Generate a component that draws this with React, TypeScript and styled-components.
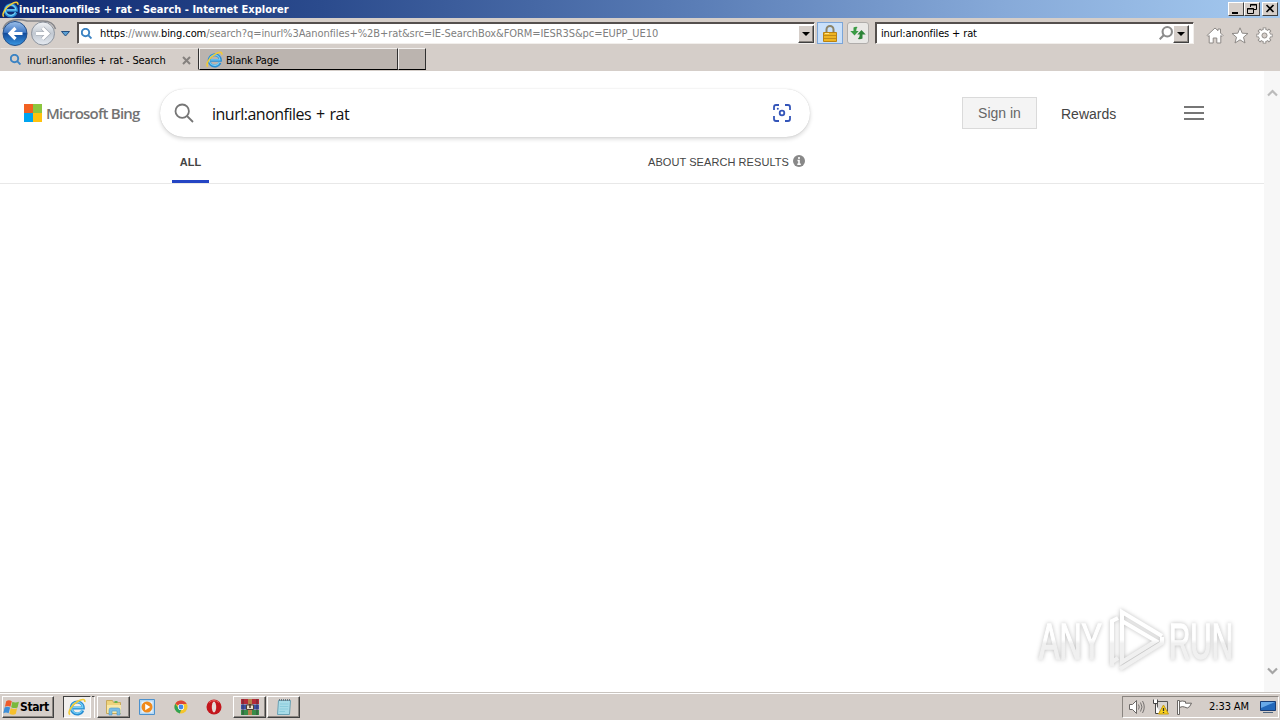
import React from 'react';
import styled, {createGlobalStyle} from 'styled-components';

const GlobalStyle = createGlobalStyle`
  * {
    box-sizing: border-box;
  }

  body {
    margin: 0;
    background: white;
    overflow: hidden;
  }

  svg {
    display: block;
    flex-shrink: 0;
  }
`;

const face = '#d5cec9';
const uiFont = '"DejaVu Sans Condensed", "DejaVu Sans", sans-serif';

const Window = styled.div`
  display: flex;
  flex-direction: column;
  width: 1280px;
  height: 720px;
  background: ${face};
  font-family: ${uiFont};
  font-size: 11px;
  color: black;
`;

const Label = styled.span<{ $spacing?: number }>`
  white-space: pre;
  line-height: 14px;
  letter-spacing: ${p => p.$spacing || 0}px;
`;

const TitleBar = styled.div`
  display: flex;
  align-items: center;
  height: 18px;
  padding: 0 2px;
  background: linear-gradient(90deg, #0e2870 0%, #2b4b8d 25%, #5679b3 52%, #86a9d8 78%, #a5caf0 100%);
  color: white;
  font-weight: bold;
`;

const TitleText = styled(Label)`
  flex: 1;
  margin-top: 1px;
`;

const CaptionButton = styled.div<{ $gap?: number }>`
  width: 16px;
  height: 14px;
  margin-left: ${p => p.$gap || 0}px;
  background: ${face};
  border: 1px solid;
  border-color: white #404040 #404040 white;
`;

const NavBar = styled.div`
  display: flex;
  align-items: flex-start;
  height: 30px;
  padding: 1px 8px 0 1px;
`;

const DropArrow = styled.div`
  margin: 12px 7px 0 3px;
`;

const Field = styled.div<{ $width: number }>`
  display: flex;
  align-items: center;
  width: ${p => p.$width}px;
  height: 22px;
  margin-top: 3px;
  padding-left: 3px;
  background: white;
  border: 1px solid;
  border-color: #55504e #f2efec #f2efec #55504e;
  box-shadow: inset 1px 1px 0 #55504e;
`;

const SearchField = styled(Field)`
  margin-left: 6px;
  padding: 0 4px 0 5px;
`;

const FieldText = styled(Label)`
  flex: 1;
  margin-top: 2px;
  color: #808080;

  > b {
    font-weight: normal;
    color: black;
  }
`;

const Address = styled(FieldText)`
  margin-left: 8px;
`;

const DropButton = styled.div`
  display: flex;
  align-items: center;
  justify-content: center;
  width: 16px;
  height: 18px;
  margin-top: 1px;
  background: ${face};
  border: 1px solid;
  border-color: white #404040 #404040 white;
  box-shadow: inset -1px -1px 0 #8a8580;
`;

const ToolButton = styled.div<{ $active?: boolean }>`
  display: flex;
  align-items: center;
  justify-content: center;
  width: ${p => p.$active ? 26 : 22}px;
  height: 22px;
  margin: 3px 0 0 ${p => p.$active ? 2 : 4}px;
  background: ${p => p.$active ? '#c9e0fa' : '#e9e8e6'};
  border: 1px solid ${p => p.$active ? '#7ba5d8' : '#b0adab'};
  border-radius: ${p => p.$active ? 0 : 3}px;
`;

const Commands = styled.div`
  display: flex;
  gap: 7px;
  margin: 8px -1px 0 auto;
`;

const TabStrip = styled.div`
  display: flex;
  height: 23px;
  border-bottom: 1px solid ${face};
`;

const Tab = styled.div<{ $width: number; $active?: boolean }>`
  display: flex;
  align-items: center;
  width: ${p => p.$width}px;
  height: 22px;
  padding-left: ${p => p.$active ? 9 : 6}px;
  background: ${p => p.$active ? face : '#bbb4af'};
  border: 1px solid;
  border-color: ${p => p.$active ? '#e9e5e2 #303030 transparent transparent' : '#f2efed #303030 #000 #f2efed'};
`;

const TabText = styled(Label)<{ $gap: number }>`
  flex: 1;
  margin: 3px 0 0 ${p => p.$gap}px;
`;

const CloseMark = styled.svg`
  margin: 2px 7px 0 0;
`;

const Page = styled.div`
  display: flex;
  height: 621px;
  background: white;
`;

const Document = styled.div`
  flex: 1;
  font-family: "Liberation Sans", Arial, sans-serif;
`;

const ScrollBar = styled.div`
  display: flex;
  flex-direction: column;
  justify-content: space-between;
  align-items: center;
  width: 16px;
  padding: 18px 0 17px;
  background: #f7f7f7;
`;

const BingHeader = styled.header`
  display: flex;
  align-items: flex-start;
  height: 67px;
  padding: 18px 60px 0 24px;
`;

const Brand = styled.div`
  display: flex;
  align-items: center;
  width: 136px;
  margin-top: 14px;
  gap: 4px;
`;

const Squares = styled.div`
  display: grid;
  grid-template-columns: 9px 9px;
  grid-template-rows: 9px 9px;

  > i:nth-child(1) { background: #f26122; }
  > i:nth-child(2) { background: #8cc63f; }
  > i:nth-child(3) { background: #00a4ef; }
  > i:nth-child(4) { background: #ffc20e; }
`;

const BrandText = styled.span`
  font: 600 15px/20px "Open Sans", sans-serif;
  letter-spacing: -0.8px;
  white-space: nowrap;
  color: #737373;
`;

const SearchBox = styled.div`
  display: flex;
  align-items: center;
  width: 650px;
  height: 48px;
  padding: 0 18px 0 14px;
  border-radius: 24px;
  box-shadow: 0 0 1px rgba(0, 0, 0, .2), 0 2px 4px rgba(0, 0, 0, .16);
`;

const Query = styled.span`
  flex: 1;
  margin: 2px 0 0 18px;
  font: 16px/22px "Open Sans", sans-serif;
  letter-spacing: -0.5px;
  word-spacing: 1.2px;
  color: #111;
`;

const SignIn = styled.div`
  width: 75px;
  height: 32px;
  margin: 8px 24px 0 152px;
  background: #f4f4f4;
  border: 1px solid #dadada;
  font-size: 14px;
  line-height: 31px;
  text-align: center;
  color: #666;
`;

const Rewards = styled.span`
  margin-top: 17px;
  font-size: 14px;
  line-height: 16px;
  color: #444;
`;

const Burger = styled.div`
  width: 20px;
  height: 14px;
  margin: 17px 0 0 auto;
  border: solid #767676;
  border-width: 2px 0;
  background: linear-gradient(#767676, #767676) 0 4px / 20px 2px no-repeat;
`;

const Scope = styled.nav`
  display: flex;
  justify-content: space-between;
  height: 46px;
  padding: 0 459px 0 172px;
  border-bottom: 1px solid #e8e8e8;
  font-size: 11px;
  line-height: 14px;
  color: #444;
`;

const ScopeItem = styled.div`
  width: 37px;
  height: 45px;
  padding-top: 17px;
  border-bottom: 3px solid #2445c4;
  font-weight: bold;
  text-align: center;
`;

const About = styled.div`
  display: flex;
  align-items: flex-start;
  gap: 4px;
  height: 14px;
  margin-top: 17px;
  letter-spacing: 0.07px;
  white-space: nowrap;
`;

// Floats over the lower right corner of the page
const Watermark = styled.svg`
  position: absolute;
  left: 1030px;
  top: 600px;
  filter: drop-shadow(0 0 2px rgba(0, 0, 0, .26));
`;

const TaskBar = styled.div`
  display: flex;
  align-items: flex-start;
  height: 28px;
  padding: 2px 1px 0 2px;
  border-top: 1px solid #c9c4bf;
  box-shadow: inset 0 1px 0 white;
`;

const TaskButton = styled.div<{ $width: number; $kind?: 'flat' | 'pressed'; $gap?: number }>`
  display: flex;
  align-items: center;
  justify-content: center;
  width: ${p => p.$width}px;
  height: 22px;
  margin: 1px 0 0 ${p => p.$gap || 0}px;
  background: ${p => p.$kind === 'pressed' ? '#f2f0ee' : face};
  border: 1px solid;
  border-color: ${p => p.$kind === 'flat' ? 'transparent' : p.$kind === 'pressed' ? '#404040 white white #404040' : 'white #404040 #404040 white'};
  box-shadow: ${p => p.$kind ? 'none' : 'inset -1px -1px 0 #8a8580'};
`;

const StackEdge = styled.div`
  width: 3px;
  height: 22px;
  margin: 1px 0 0 1px;
  border-top: 1px solid #404040;
  border-right: 1px solid white;
`;

const StartButton = styled(TaskButton)`
  justify-content: flex-start;
`;

const StartText = styled.span`
  font-size: 12px;
  font-weight: bold;
  letter-spacing: -0.4px;
`;

const Tray = styled.div`
  display: flex;
  align-items: center;
  width: 157px;
  height: 22px;
  margin: 1px 0 0 auto;
  padding-left: 5px;
  gap: 7px;
  border: 1px solid;
  border-color: #8a8580 white white #8a8580;
`;

const Clock = styled(Label)`
  width: 43px;
  margin: 0 1px 0 9px;
`;

const IeIcon = ({size}: { size: number }) => (
  <svg width={size} height={size} viewBox="0 0 18 18" fill="none">
    <path d="M14.8 12.400A6 6 0 1 1 15.300 10H5" stroke="#2a8dd2" strokeWidth="3"/>
    <path d="M14.300 12A5.600 5.600 0 1 1 14.800 9.500H5" stroke="#74d0f7" strokeWidth="1.300"/>
    <path d="M1.800 16.700C-.8 13.800 4 6.800 9.800 3.300 13.800 .8 17.500 .6 16.700 4" stroke="#f3cb35" strokeWidth="1.600"/>
  </svg>
);

const SearchIcon = ({size, color, width, flip}: { size: number; color: string; width: number; flip?: boolean }) => (
  <svg width={size} height={size} viewBox="0 0 20 20" fill="none" stroke={color} strokeWidth={width}>
    <g transform={flip ? 'translate(20 0) scale(-1 1)' : undefined}>
      <circle cx="8.200" cy="8.200" r="6.700"/>
      <path d="M13 13l6 6"/>
    </g>
  </svg>
);

const Triangle = () => (
  <svg width="8" height="4" viewBox="0 0 8 4"><path d="M0 0h8L4 4z"/></svg>
);

const NavButtons = () => (
  <svg width="57" height="28" viewBox="0 0 57 28">
    <defs>
      <linearGradient id="back" x2="0" y2="1">
        <stop offset="0" stopColor="#9dc0ea"/>
        <stop offset=".45" stopColor="#3f78c4"/>
        <stop offset=".5" stopColor="#124c9d"/>
        <stop offset="1" stopColor="#3b98e2"/>
      </linearGradient>
      <linearGradient id="forward" x2="0" y2="1">
        <stop offset="0" stopColor="#f2f4f7"/>
        <stop offset=".5" stopColor="#c1c8d1"/>
        <stop offset="1" stopColor="#e6ebf2"/>
      </linearGradient>
    </defs>
    <path d="M2 10C5 0 18-.5 26 2h16c7 0 11 3 12.500 8" fill="none" stroke="#85868a" strokeWidth="1.500"/>
    <circle cx="14" cy="14.500" r="12" fill="url(#back)" stroke="#24508a"/>
    <circle cx="42" cy="14.500" r="11.500" fill="url(#forward)" stroke="#8d949e"/>
    <path d="M21.500 14.500H9m5.500-5.500L9 14.500l5.500 5.500" fill="none" stroke="white" strokeWidth="3.200"/>
    <path d="M35 14.500h12m-5.500-5.500l5.500 5.500-5.500 5.500" fill="none" stroke="#a3a9b2" strokeWidth="4.200"/>
    <path d="M35 14.500h12m-5.500-5.500l5.500 5.500-5.500 5.500" fill="none" stroke="white" strokeWidth="3"/>
  </svg>
);

const LockIcon = () => (
  <svg width="14" height="17" viewBox="0 0 14 17">
    <path d="M3.500 8V4.500a3.500 3.500 0 0 1 7 0V8" fill="none" stroke="#8c8468" strokeWidth="2"/>
    <path d="M.5 7.500h13v9H.5z" fill="#eeb422" stroke="#b98212"/>
    <path d="M1 10.500h12M1 13.500h12" stroke="#c18b18"/>
    <path d="M2 8.500h4" stroke="#ffe58a"/>
  </svg>
);

const RefreshIcon = () => (
  <svg width="16" height="14" viewBox="0 0 16 14">
    <path d="M3.500 1.500v3.500H.3L4.500 9.500l4.200-4.500H6.200Q6.200 2.500 7.500 1q-2-.5-4 .5z" fill="#3a9b45"/>
    <path d="M12.500 12.500V8.500h3.200L11.500 4l-4.200 4.500h2.500q0 2.500-2 4.500 2.700.5 4.700-.5z" fill="#2c8438"/>
  </svg>
);

const HomeIcon = () => (
  <svg width="18" height="17" viewBox="0 0 18 17" fill="white" stroke="#8d8986">
    <path d="M1 8.500L9 1l3 2.700V2h2.500v4L17 8.500l-1 1-1.200-1V16h-4v-5H7.200v5h-4V8.500l-1.200 1z"/>
  </svg>
);

const StarIcon = () => (
  <svg width="18" height="17" viewBox="0 0 18 17" fill="white" stroke="#8d8986">
    <path d="M9 .8l2.200 5.400 5.800.3-4.500 3.700 1.500 5.800L9 12.800 4 16l1.500-5.800L1 6.500l5.800-.3z"/>
  </svg>
);

const GearIcon = () => (
  <svg width="17" height="17" viewBox="0 0 18 18">
    <g stroke="#8d8986" strokeWidth="3.800">
      <path d="M9 .5v17M.5 9h17M3 3l12 12M15 3L3 15"/>
    </g>
    <circle cx="9" cy="9" r="6.800" fill="#8d8986"/>
    <g stroke="white" strokeWidth="1.900">
      <path d="M9 1.300v15.400M1.300 9h15.400M3.600 3.600l10.800 10.800M14.400 3.600L3.600 14.400"/>
    </g>
    <circle cx="9" cy="9" r="6" fill="white"/>
    <circle cx="9" cy="9" r="2.700" fill={face} stroke="#8d8986"/>
  </svg>
);

const LensIcon = () => (
  <svg width="20" height="20" viewBox="0 0 20 20" fill="none" stroke="#3455b9" strokeWidth="1.800">
    <path d="M2 7V4q0-2 2-2h3M13 2h3q2 0 2 2v3M18 13v3q0 2-2 2h-3M7 18H4q-2 0-2-2v-3"/>
    <circle cx="10" cy="10" r="2.300"/>
    <circle cx="5.800" cy="5.800" r="1" fill="#3455b9" stroke="none"/>
  </svg>
);

const InfoIcon = () => (
  <svg width="12" height="12" viewBox="0 0 12 12">
    <circle cx="6" cy="6" r="6" fill="#888"/>
    <path d="M6 2v2M4.500 5.500H6V9M4.300 9.200h3.500" stroke="white" strokeWidth="1.600" fill="none"/>
  </svg>
);

const Chevron = ({down}: { down?: boolean }) => (
  <svg width="11" height="8" viewBox="0 0 11 8">
    <path
      d={down ? 'M1 1.500l4.500 4.500L10 1.500' : 'M1 6.500L5.500 2 10 6.500'}
      fill="none"
      stroke={down ? '#a5a5a5' : '#bbb'}
      strokeWidth="2.200"
    />
  </svg>
);

const WindowsFlag = () => (
  <svg width="17" height="17" viewBox="0 0 16 16">
    <path d="M3 2q2.500-1.600 5.300 0L7 7.300q-2.500-1.600-5.200 0z" fill="#ee5c2c"/>
    <path d="M8.800 2.500q2.500 1.500 6.200 0l-1.300 5.500q-3 1.300-6-.3z" fill="#7ab93c"/>
    <path d="M1.500 8q2.500-1.600 5.200 0l-1.400 5.500q-2.500-1.600-5 0z" fill="#3d8ed8"/>
    <path d="M7.300 8.500q2.700 1.500 6 .2l-1.300 5.500q-3 1.200-6-.4z" fill="#f6c02d"/>
  </svg>
);

const FolderIcon = () => (
  <svg width="18" height="18" viewBox="0 0 18 18">
    <path d="M1.500 2.500h6l1 2h7v11h-14z" fill="#eed37c" stroke="#c8a95a"/>
    <path d="M2 7h14v8H2z" fill="#f8e8a8"/>
    <path d="M4 17v-5q0-2 2-2h7q2 0 2 2v5h-3v-4H7v4z" fill="#79bce4" stroke="#4c97c9" strokeWidth=".6"/>
    <path d="M9.500 4h3" stroke="#65b54d" strokeWidth="2"/>
  </svg>
);

const MediaIcon = () => (
  <svg width="16" height="16" viewBox="0 0 16 16">
    <path d="M.5.5h15v15H.5z" fill="#b5d8f3" stroke="#4c91cd"/>
    <path d="M2.500 2.500h11v11h-11z" fill="#e8f5ff"/>
    <circle cx="8" cy="8" r="5.500" fill="#f08a1c"/>
    <path d="M6.200 4.800v6.400L11.300 8z" fill="white"/>
  </svg>
);

const ChromeIcon = () => (
  <svg width="14" height="14" viewBox="0 0 14 14">
    <circle cx="7" cy="7" r="6.500" fill="#f4c52c"/>
    <path d="M7 7L1.300 3.800A6.500 6.500 0 0 1 12.700 4H7z" fill="#dc4437"/>
    <path d="M1.300 3.800L5 9l2 1-1.200 3.400A6.500 6.500 0 0 1 1.300 3.800z" fill="#30a255"/>
    <circle cx="7" cy="7" r="3.100" fill="white"/>
    <circle cx="7" cy="7" r="2.400" fill="#4187e8"/>
  </svg>
);

const OperaIcon = () => (
  <svg width="16" height="16" viewBox="0 0 16 16">
    <circle cx="8" cy="8" r="7.500" fill="#c3161c"/>
    <path d="M3 3.500Q8-.5 13 3.500" fill="none" stroke="#ec5e5a"/>
    <ellipse cx="8" cy="8" rx="2.200" ry="5.400" fill="#e5dbd7"/>
  </svg>
);

const RarIcon = () => (
  <svg width="18" height="18" viewBox="0 0 18 18">
    <path d="M0 1h18v5H0z" fill="#b52b38"/>
    <path d="M0 6.500h18v5H0z" fill="#3e51a4"/>
    <path d="M0 12h18v5H0z" fill="#388c49"/>
    <path d="M2 1v16M16 1v16" stroke="#2b2432" strokeOpacity=".6"/>
    <path d="M7 1h4v16H7z" fill="#b5814a"/>
    <path d="M5.500 7h7v4.500h-7z" fill="#eadfca" stroke="#514032"/>
    <path d="M9 6v4" stroke="#4a3627" strokeWidth="1.500"/>
  </svg>
);

const NotepadIcon = () => (
  <svg width="16" height="18" viewBox="0 0 16 18">
    <path d="M2.500 2.500h12l-1 14h-12z" fill="#a8dce8" stroke="#6aa1b4"/>
    <path d="M4 6h8.500M3.800 8.500h8.500M3.600 11h8.500M3.400 13.500H9" stroke="#8accdc"/>
    <path d="M3 2h11.500" stroke="#667680" strokeWidth="2" strokeDasharray="1 1"/>
  </svg>
);

const SpeakerIcon = () => (
  <svg width="17" height="16" viewBox="0 0 17 16" fill="none" stroke="#6b6866">
    <path d="M1.500 5.500h3l4-4v13l-4-4h-3z" fill="white"/>
    <path d="M10.500 5.500q1.500 2.500 0 5M12.500 3.500q3 4.500 0 9M14.500 2q3.500 6 0 12" strokeWidth=".9"/>
  </svg>
);

const NetworkIcon = () => (
  <svg width="17" height="16" viewBox="0 0 17 16">
    <path d="M5.500 2.500h10v10h-10z" fill="#d8d5d1" stroke="#555"/>
    <path d="M1.500.5v4h4v-4M3.500 4.500v10h5" fill="white" stroke="#454545"/>
    <path d="M11.500 6L16.500 15h-10z" fill="#f9d21c" stroke="#c89d11"/>
    <path d="M11.500 9v3M11.500 13v1" stroke="#333" strokeWidth="1.300"/>
  </svg>
);

const FlagIcon = () => (
  <svg width="17" height="16" viewBox="0 0 17 16" fill="white" stroke="#696663">
    <path d="M1.500 1.500h2v14h-2zM3.500 2.500q2.500-1 6 0v1.700h6l-2 3.500q-2 2.500-5 .3-2-1-5 .5z"/>
  </svg>
);

const DesktopIcon = () => (
  <svg width="16" height="14" viewBox="0 0 16 14">
    <path d="M.5 1.500h15v9H.5z" fill="#2368ba" stroke="#193d75"/>
    <path d="M1 2h14L1 8z" fill="#68a9e8"/>
    <path d="M3 12.500h10" stroke="#4d647e"/>
  </svg>
);

function App() {
  return (
    <Window>
      <GlobalStyle/>
      <TitleBar>
        <IeIcon size={17}/>
        <TitleText $spacing={0.02}>inurl:anonfiles + rat - Search - Internet Explorer</TitleText>
        <CaptionButton>
          <svg width="14" height="12"><path d="M3 9h6v2H3z"/></svg>
        </CaptionButton>
        <CaptionButton>
          <svg width="14" height="12" fill="none" stroke="black">
            <path d="M5.500 4V1.500h6v5H9M5 2h7M2.500 5.500h6v5h-6zM2 6h7"/>
          </svg>
        </CaptionButton>
        <CaptionButton $gap={2}>
          <svg width="14" height="12"><path d="M3.500 2l7 7m0-7l-7 7" stroke="black" strokeWidth="1.700"/></svg>
        </CaptionButton>
      </TitleBar>

      <NavBar>
        <NavButtons/>
        <DropArrow>
          <svg width="9" height="6" viewBox="0 0 9 6"><path d="M.5.5h8l-4 4.500z" fill="#5ba0d4" stroke="#244f80"/></svg>
        </DropArrow>
        <Field $width={738}>
          <SearchIcon size={11} color="#3b83c3" width={3.5}/>
          <Address $spacing={-0.08}>
            <b>https</b>://www.<b>bing.com</b>/search?q=inurl%3Aanonfiles+%2B+rat&amp;src=IE-SearchBox&amp;FORM=IESR3S&amp;pc=EUPP_UE10
          </Address>
          <DropButton><Triangle/></DropButton>
        </Field>
        <ToolButton $active><LockIcon/></ToolButton>
        <ToolButton><RefreshIcon/></ToolButton>
        <SearchField $width={319}>
          <FieldText $spacing={-0.15}><b>inurl:anonfiles + rat</b></FieldText>
          <SearchIcon size={14} color="#8b8b8b" width={3} flip/>
          <DropButton><Triangle/></DropButton>
        </SearchField>
        <Commands>
          <HomeIcon/>
          <StarIcon/>
          <GearIcon/>
        </Commands>
      </NavBar>

      <TabStrip>
        <Tab $width={199} $active>
          <SearchIcon size={11} color="#3b83c3" width={3.5}/>
          <TabText $gap={6} $spacing={-0.14}>inurl:anonfiles + rat - Search</TabText>
          <CloseMark width="9" height="9" viewBox="0 0 9 9">
            <path d="M1 1l7 7M8 1L1 8" stroke="#85817e" strokeWidth="2"/>
          </CloseMark>
        </Tab>
        <Tab $width={199}>
          <IeIcon size={17}/>
          <TabText $gap={3} $spacing={-0.2}>Blank Page</TabText>
        </Tab>
        <Tab $width={28}/>
      </TabStrip>

      <Page>
        <Document>
          <BingHeader>
            <Brand>
              <Squares><i/><i/><i/><i/></Squares>
              <BrandText>Microsoft Bing</BrandText>
            </Brand>
            <SearchBox>
              <SearchIcon size={20} color="#767676" width={1.8}/>
              <Query>inurl:anonfiles + rat</Query>
              <LensIcon/>
            </SearchBox>
            <SignIn>Sign in</SignIn>
            <Rewards>Rewards</Rewards>
            <Burger/>
          </BingHeader>
          <Scope>
            <ScopeItem>ALL</ScopeItem>
            <About>ABOUT SEARCH RESULTS <InfoIcon/></About>
          </Scope>
        </Document>
        <ScrollBar>
          <Chevron/>
          <Chevron down/>
        </ScrollBar>
      </Page>

      <Watermark width="250" height="80" viewBox="0 0 250 80">
        <defs>
          <linearGradient id="mark" gradientUnits="userSpaceOnUse" x1="0" y1="10" x2="0" y2="72">
            <stop offset=".48" stopColor="#fff"/>
            <stop offset=".54" stopColor="#f0f0f0"/>
          </linearGradient>
        </defs>
        <g
          fontFamily="'Liberation Sans Narrow', 'Liberation Sans', sans-serif"
          fontSize="50"
          fill="url(#mark)"
          stroke="url(#mark)"
          strokeWidth="1.400"
        >
          <text x="9" y="59" textLength="63" lengthAdjust="spacingAndGlyphs">ANY</text>
          <text x="139" y="59" textLength="64" lengthAdjust="spacingAndGlyphs">RUN</text>
        </g>
        <g fill="none" stroke="url(#mark)" strokeWidth="4">
          <path d="M88 18l-6 3v41l6-4"/>
          <path d="M92 39V12l40 24"/>
          <path d="M92 36V21l34 20-34 21V30"/>
          <path d="M82 62v4M90 69l42-26v-6"/>
        </g>
      </Watermark>

      <TaskBar>
        <StartButton $width={52}>
          <WindowsFlag/>
          <StartText>Start</StartText>
        </StartButton>
        <TaskButton $width={28} $kind="pressed" $gap={9}><IeIcon size={18}/></TaskButton>
        <StackEdge/>
        <TaskButton $width={33} $gap={2}><FolderIcon/></TaskButton>
        <TaskButton $width={32} $kind="flat" $gap={1}><MediaIcon/></TaskButton>
        <TaskButton $width={32} $kind="flat" $gap={2}><ChromeIcon/></TaskButton>
        <TaskButton $width={32} $kind="flat" $gap={1}><OperaIcon/></TaskButton>
        <TaskButton $width={33} $gap={3}><RarIcon/></TaskButton>
        <TaskButton $width={33} $gap={1}><NotepadIcon/></TaskButton>
        <Tray>
          <SpeakerIcon/>
          <NetworkIcon/>
          <FlagIcon/>
          <Clock $spacing={-0.1}>2:33 AM</Clock>
          <DesktopIcon/>
        </Tray>
      </TaskBar>
    </Window>
  );
}

export default App;
